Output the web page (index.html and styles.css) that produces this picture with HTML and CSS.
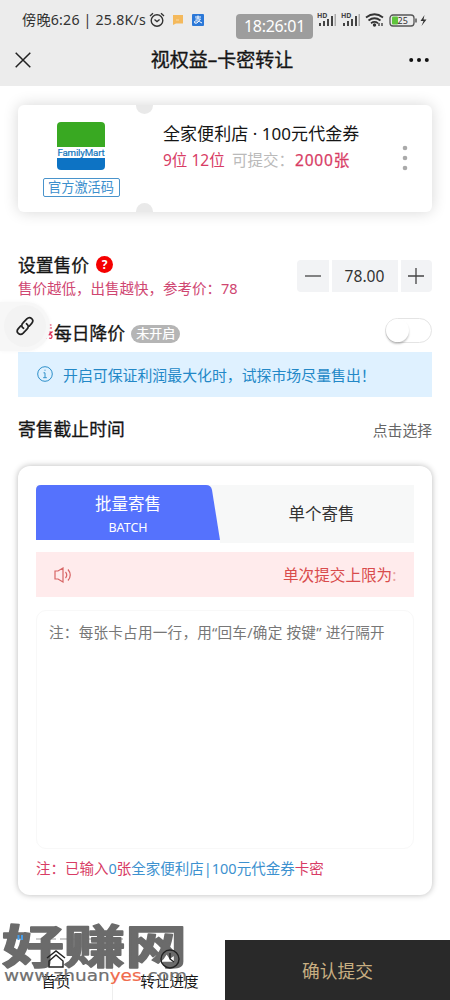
FILE: index.html
```html
<!DOCTYPE html>
<html lang="zh-CN">
<head>
<meta charset="utf-8">
<title>视权益–卡密转让</title>
<link rel="stylesheet" href="styles.css">
</head>
<body>
<header class="top">
  <div class="status">
    <span class="status-text">傍晚6:26 | 25.8K/s</span>
    <svg class="alarm" width="16" height="16" viewBox="0 0 16 16" fill="none" stroke="#333" stroke-width="1.4"><circle cx="8" cy="8.5" r="5.8"/><path d="M5.5 7.5L8 9.5l2.6-2M1 4l3-2.7M15 4l-3-2.7"/></svg>
    <svg class="msg" width="12" height="12" viewBox="0 0 12 12"><path fill="#f4b95c" d="M1 1h10v8.500H4L1 11z"/><path stroke="#fad9a0" d="M4 6h3"/></svg>
    <svg class="pay" width="12" height="12" viewBox="0 0 12 12"><rect width="12" height="12" rx="1" fill="#2b78d8"/><path d="M3 3h6M6 1.500V5M3.500 5h5L5 9Q2 10 2.500 7.500q2-2 7.500 1.500" fill="none" stroke="#fff"/></svg>
    <span class="clock">18:26:01</span>
    <svg class="system" width="112" height="18" viewBox="0 0 112 18">
      <g id="sig" fill="#444"><path d="M2 12h2v3H2zM6 10h2v5H6zM10 8h2v7h-2zM14 5h2v10h-2z"/><path fill="#aaa" d="M17.500 3H19v12h-1.500z"/><text x="0" y="6.500" font-size="7" font-weight="700">HD</text></g>
      <use href="#sig" x="24"/>
      <g fill="none" stroke="#333" stroke-width="1.800"><path d="M49 6.500q8.500-6.500 17 0M51.500 9.500q6-4.500 12 0M54 12.200q3.500-2.500 7 0"/></g>
      <circle cx="57.500" cy="14" r="1.700" fill="#333"/><path d="M62 12v3M65 12v3" stroke="#333" stroke-width="1.300"/>
      <rect x="73" y="4" width="24" height="11" rx="3" fill="none" stroke="#555" stroke-width="1.300"/><rect x="75" y="5.500" width="6" height="8" rx="1" fill="#5fc43c"/><path d="M99 7.500v4" stroke="#555" stroke-width="1.500"/><text x="80.500" y="12.800" font-size="9" fill="#333">25</text>
      <path d="M107.500 4l-4 6h3l-2 5 5-6.500h-3z" fill="#333"/>
    </svg>
  </div>
  <div class="nav">
    <svg width="16" height="16" viewBox="0 0 16 16" stroke="#222" stroke-width="1.500"><path d="M.7.7l14.600 14.600M15.300.7L.7 15.300"/></svg>
    <h1>视权益–卡密转让</h1>
    <svg width="20" height="6" viewBox="0 0 20 6" fill="#111"><circle cx="2.200" cy="3" r="2"/><circle cx="10" cy="3" r="2"/><circle cx="17.800" cy="3" r="2"/></svg>
  </div>
</header>

<main>
  <section class="coupon">
    <div class="brand">
      <div class="logo"><span>FamilyMart</span></div>
      <div class="stamp">官方激活码</div>
    </div>
    <div class="detail">
      <div class="name">全家便利店 · 100元代金券</div>
      <div class="meta"><span class="pink">9位 12位</span><span class="muted">可提交：</span><span class="pink strong">2000张</span></div>
    </div>
    <svg class="more" width="6" height="26" viewBox="0 0 6 26" fill="#aaa"><circle cx="3" cy="3" r="2.300"/><circle cx="3" cy="13" r="2.300"/><circle cx="3" cy="23" r="2.300"/></svg>
    <i class="notch notch-top"></i><i class="notch notch-bottom"></i>
  </section>

  <section class="price">
    <div>
      <div class="heading">设置售价<b class="help">?</b></div>
      <div class="hint">售价越低，出售越快，参考价：78</div>
    </div>
    <div class="stepper">
      <span class="step left"><svg width="16" height="16" viewBox="0 0 16 16"><path d="M0 8h16" stroke="#444" stroke-width="1.300"/></svg></span>
      <span class="amount">78.00</span>
      <span class="step right"><svg width="16" height="16" viewBox="0 0 16 16"><path d="M0 8h16M8 0v16" stroke="#444" stroke-width="1.300"/></svg></span>
    </div>
  </section>

  <section class="daily">
    <svg class="mark" width="8" height="18" viewBox="0 0 8 18" fill="none" stroke="#dc2850" stroke-width="1.200"><path d="M3.500 2h3M3 5h4M2.500 9h4.500l-3.500 3q3.500-1 3.500 1.500t-3 1.500M1 14v2"/></svg>
    <span class="heading">每日降价</span><span class="badge">未开启</span>
    <span class="switch"><i></i></span>
    <div class="float-link"><div class="float-disc">
      <svg width="20" height="20" viewBox="0 0 20 20" fill="none" stroke="#222" stroke-width="1.700" stroke-linecap="round"><path d="M8.500 12.300C6 10.500 6.500 8.300 8 6.800l3.800-4c3.400-3.200 8 1 4.900 4.600l-2.500 2.800M11.500 7.700c2.500 1.800 2 4 .5 5.500l-3.800 4c-3.400 3.200-8-1-4.900-4.600l2.500-2.800"/></svg>
    </div></div>
  </section>

  <section class="info">
    <svg width="16" height="16" viewBox="0 0 16 16" fill="none" stroke="#2d8fc9"><circle cx="8" cy="8" r="7.300"/><path d="M6.500 6.800H8v4.700M6.200 11.700h3.600M7.500 4.200h1"/></svg>
    <span>开启可保证利润最大化时，试探市场尽量售出！</span>
  </section>

  <section class="deadline"><span class="heading">寄售截止时间</span><span class="choose">点击选择</span></section>

  <section class="panel">
    <div class="tabs">
      <div class="tab active">
        <svg class="tab-shape" width="184" height="55" viewBox="0 0 184 55"><path fill="#5572fd" d="M0 55V5q0-5 5-5h165q5 0 6 5l8 50z"/></svg>
        <span class="tab-title">批量寄售</span><span class="tab-sub">BATCH</span>
      </div>
      <div class="tab single">单个寄售</div>
    </div>
    <div class="notice">
      <svg width="18" height="16" viewBox="0 0 18 16" fill="none" stroke="#d76565" stroke-width="1.200"><path d="M1 4h3l5-3v14l-5-3H1zM11.500 5q2.500 3 0 6M14 2.500q4.500 5.500 0 11"/></svg>
      <div class="ticker">单次提交上限为<span>:</span></div>
    </div>
    <div class="codes">注：每张卡占用一行，用“回车/确定 按键” 进行隔开</div>
    <div class="summary">注：已输入<em>0</em>张<em>全家便利店|100元代金券</em>卡密</div>
  </section>
</main>

<footer>
  <div class="foot-item home"><svg width="20" height="20" viewBox="0 0 20 20" fill="none" stroke="#222" stroke-width="1.400"><path d="M1 9l9-7 9 7M3 18v-6l7-6 7 6v6z"/></svg><span>首页</span></div>
  <div class="foot-item"><svg width="20" height="20" viewBox="0 0 20 20" fill="none" stroke="#222" stroke-width="1.400"><circle cx="10" cy="10" r="9"/><path d="M10 4v6l4 3"/></svg><span>转让进度</span></div>
  <button>确认提交</button>
  <svg class="watermark" width="190" height="76" viewBox="0 0 190 76">
    <path d="M36 19h87" stroke="#999" stroke-dasharray="8 4"/>
    <text class="wm-name" x="2" y="42.500" textLength="185" lengthAdjust="spacingAndGlyphs">好赚网</text>
    <path d="M18.500 15v5M22 15v5" stroke="#479de8" stroke-width="2"/>
    <text class="wm-url" x="4" y="60.500" textLength="183" lengthAdjust="spacingAndGlyphs">www.zhuan<tspan>yes</tspan>.com</text>
  </svg>
</footer>
</body>
</html>
```
FILE: styles.css
```css
* { box-sizing: border-box; }
body { margin: 0; width: 450px; height: 1000px; overflow: hidden; display: flex; flex-direction: column; background: #fff; color: #151515; font-family: "Noto Sans", "Noto Sans CJK SC", sans-serif; white-space: nowrap; }
svg { display: block; flex: none; }

.top { height: 86px; background: #ececec; }
.status { height: 38px; padding: 2px 0 0 22px; display: flex; align-items: center; color: #333; }
.status-text { width: 126px; font-size: 14.2px; line-height: 20px; letter-spacing: .2px; }
.alarm { margin-left: 1px; }
.msg { margin-left: 7px; }
.pay { margin-left: 8px; }
.clock { width: 77px; height: 25px; margin: 12px 0 0 32px; border-radius: 4px; background: #9d9d9d; color: #fff; font-size: 16px; line-height: 25px; text-align: center; letter-spacing: -.3px; }
.system { margin-left: 4px; }
.nav { height: 44px; padding: 0 21px 0 15px; display: flex; align-items: center; justify-content: space-between; }
.nav h1 { margin: 0 0 0 4px; font-size: 19px; line-height: 26px; font-weight: 400; -webkit-text-stroke: .35px; }

main { height: 854px; padding: 19px 18px 0; }
.coupon { position: relative; height: 107px; display: flex; align-items: center; border-radius: 6px; background: #fff; box-shadow: 0 0 15px rgba(0,0,0,.16); }
.brand { width: 126px; height: 107px; padding-top: 17px; display: flex; flex-direction: column; align-items: center; gap: 8px; }
.logo { width: 48px; height: 48px; border-radius: 4px; display: flex; align-items: center; justify-content: center; background: linear-gradient(#39a922 0 25px, #fff 25px 36px, #0d73c4 36px); }
.logo span { margin-top: 13px; font-family: Roboto, sans-serif; font-size: 9.7px; line-height: 12px; letter-spacing: -.15px; color: #1678bd; -webkit-text-stroke: .2px; }
.stamp { width: 77px; height: 19px; border: 1px solid #4993cb; border-radius: 2px; color: #3c8fcd; font-size: 13.2px; line-height: 17px; text-align: center; }
.detail { width: 258px; height: 107px; padding: 16px 0 0 19px; }
.name { font-size: 17px; line-height: 26px; letter-spacing: .05px; }
.meta { display: flex; font-size: 15.5px; line-height: 26px; color: #d83c65; }
.meta .pink:first-child { width: 69px; }
.meta .muted { width: 63px; color: #bababa; }
.meta .strong { letter-spacing: .8px; -webkit-text-stroke: .25px; }
.more { margin-top: -2px; }
.notch { position: absolute; left: 118px; width: 17px; height: 9px; background: #e9e9e9; }
.notch-top { top: 0; border-radius: 0 0 9px 9px; }
.notch-bottom { bottom: 0; border-radius: 9px 9px 0 0; }

.price { height: 60px; margin-top: 40px; display: flex; justify-content: space-between; }
.heading { font-size: 17.8px; line-height: 26px; -webkit-text-stroke: .3px; }
.price .heading { display: flex; align-items: center; }
.help { width: 17px; height: 17px; margin: -2px 0 0 7px; border-radius: 50%; background: #f50000; color: #fff; font-size: 12px; line-height: 17px; text-align: center; -webkit-text-stroke: 0; }
.hint { margin-top: -1px; font-size: 14.5px; line-height: 22px; color: #cf4671; }
.stepper { height: 32px; margin-top: 8px; display: flex; gap: 3px; }
.step, .amount { height: 32px; display: flex; align-items: center; justify-content: center; background: #f2f3f5; }
.step { width: 31.5px; }
.left { border-radius: 4px 0 0 4px; }
.right { border-radius: 0 4px 4px 0; }
.amount { width: 66px; color: #333; font-size: 15.6px; }

.daily { position: relative; height: 41px; padding: 5px 0 0 27px; display: flex; align-items: flex-start; }
.mark { margin: 6px 1px 0 0; }
.daily .heading { margin-top: 3px; }
.badge { width: 49px; height: 18px; margin: 8px 0 0 6px; border-radius: 9px; background: #b5b5b5; color: #fff; font-size: 13px; line-height: 17px; text-align: center; -webkit-text-stroke: .2px; }
.switch { width: 47px; height: 25px; margin-left: auto; margin-top: 1px; border: 1px solid #e4e4e4; border-radius: 13px; }
.switch i { display: block; width: 23px; height: 23px; border-radius: 50%; background: #fff; box-shadow: 0 2px 2px rgba(0,0,0,.22); }
.float-link { position: absolute; left: -18px; top: -10px; width: 50px; height: 49px; border-radius: 0 25px 25px 0; background: #f7f7f7; box-shadow: 0 0 4px rgba(0,0,0,.04); }
.float-disc { width: 42px; height: 42px; margin: 3px 0 0 4px; border-radius: 50%; display: flex; align-items: center; justify-content: center; background: #f3f3f3; }

.info { height: 45px; margin-top: -1px; padding-left: 19px; display: flex; align-items: center; gap: 10px; background: #dff1ff; color: #2388c7; font-size: 14.9px; }
.info svg { margin-bottom: 1px; }
.deadline { height: 69px; padding-bottom: 5px; display: flex; align-items: center; justify-content: space-between; }
.choose { color: #666; font-size: 14.8px; }

.panel { height: 429px; padding: 19px 18px 0; border-radius: 12px; box-shadow: 0 0 6px rgba(0,0,0,.28); }
.tabs { height: 58px; display: flex; background: linear-gradient(#f7f8f8 55px, #fff 55px); }
.tab { flex: 1; font-size: 16.5px; line-height: 58px; text-align: center; color: #333; }
.tab.single { padding-left: 9px; background: #f7f8f8; }
.tab.active { position: relative; flex: none; width: 184px; height: 55px; padding-top: 7px; display: flex; flex-direction: column; line-height: 24px; color: #fff; }
.tab-shape { position: absolute; left: 0; top: 0; }
.tab-title, .tab-sub { position: relative; }
.tab-sub { font-size: 12.5px; line-height: 23px; }
.notice { height: 45px; margin-top: 9px; padding: 0 17px 0 18px; display: flex; align-items: center; justify-content: space-between; background: #ffebec; color: #d94c4c; }
.ticker { width: 114px; font-size: 15.6px; line-height: 26px; }
.ticker span { color: #e8a3a0; }
.codes { height: 239px; margin-top: 13px; padding: 9px 12px; border: 1px solid #f8f8f8; border-radius: 10px; color: #777; font-size: 14.6px; line-height: 24px; letter-spacing: .23px; }
.summary { margin-top: 7px; color: #d83c65; font-size: 14.5px; line-height: 24px; }
.summary em { font-style: normal; color: #3c91cf; }

footer { position: relative; height: 60px; display: flex; background: #fff; }
.foot-item { width: 113px; padding-top: 9px; display: flex; flex-direction: column; align-items: center; font-size: 14.6px; line-height: 24px; }
.foot-item svg { position: relative; z-index: 1; }
.home { border-right: 1px solid #eee; }
footer button { width: 225px; margin-left: -1px; padding: 0; border: 0; background: #292929; color: #c8af82; font: 17.7px/60px "Noto Sans CJK SC", sans-serif; }
.watermark { position: absolute; left: 0; top: -20px; overflow: visible; }
.wm-name { fill: #6b6b6b; stroke: #6b6b6b; stroke-width: 1.6px; stroke-linejoin: round; font: 700 46px "Noto Sans CJK SC", sans-serif; }
.wm-url { fill: #707070; stroke: #707070; stroke-width: .2px; font: 16px "DejaVu Sans", sans-serif; }
.wm-url tspan { fill: #f06b4d; stroke: #f06b4d; }
```
